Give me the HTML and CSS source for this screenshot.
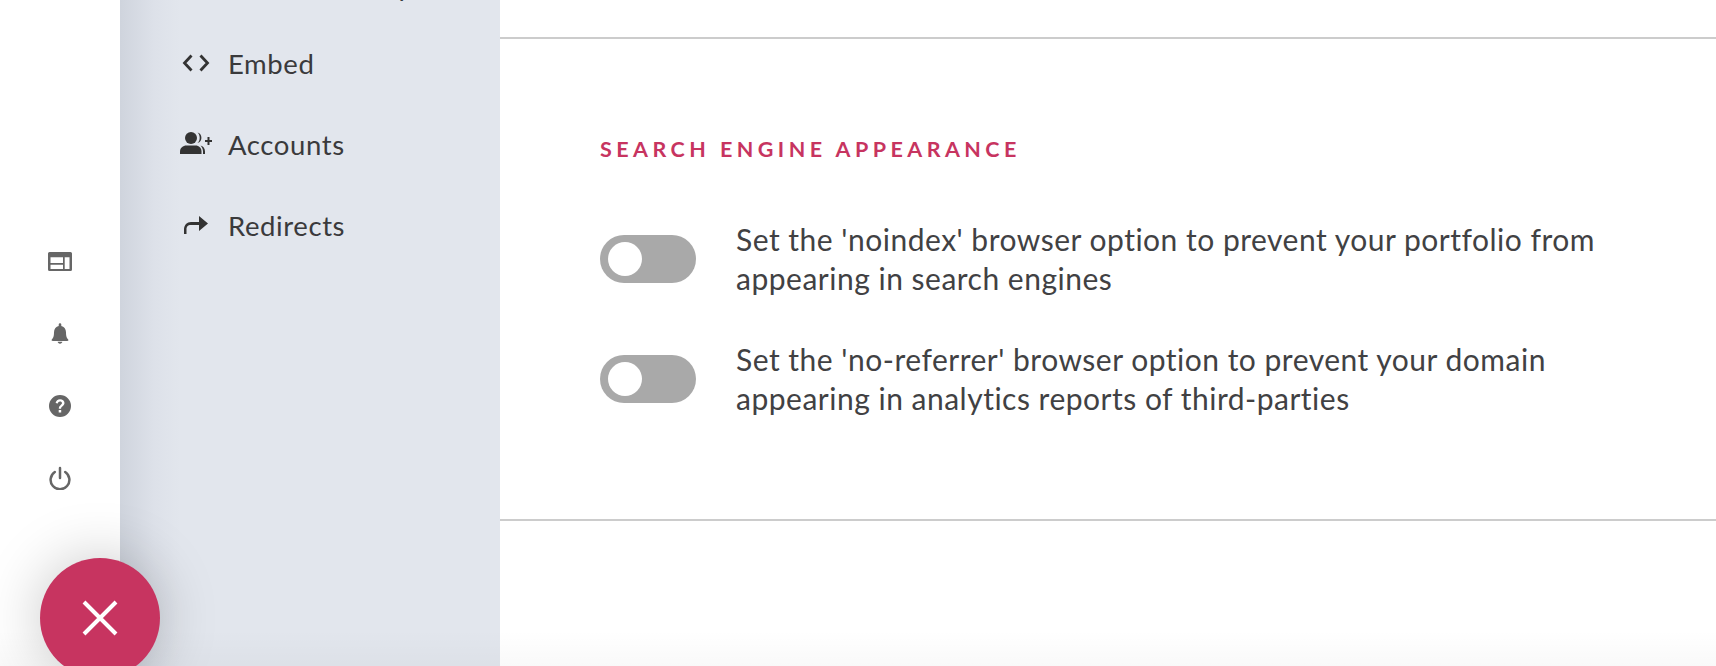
FILE: index.html
```html
<!DOCTYPE html>
<html lang="en">
<head>
    <meta charset="UTF-8">
    <meta name="viewport" content="width=device-width, initial-scale=1.0">
    <title>Portfolio settings</title>
    <link rel="stylesheet" href="styles.css">
</head>
<body>
<div class="rail">
    <svg class="rail-icon" viewBox="0 0 24 24"><path fill-rule="evenodd" d="M1.500 3h21A1.500 1.500 0 0 1 24 4.500v16a1.500 1.500 0 0 1-1.500 1.500h-21A1.500 1.500 0 0 1 0 20.500v-16A1.500 1.500 0 0 1 1.500 3zM2.500 8.300v5.700h12.500V8.300zM2.500 15.700v4.300h12.500v-4.300zM16.700 8.300v11.700H21.500V8.300z"/></svg>
    <svg class="rail-icon" viewBox="0 0 24 24"><path d="M12 22.700c1.300 0 2.300-.9 2.300-1.900H9.700c0 1 1 1.900 2.300 1.900zM20 18.200c-.9-1-2-2.200-2-7 0-3.100-2.100-5.500-4.700-6.100V3.500a1.300 1.300 0 0 0-2.600 0v1.600C8.100 5.700 6 8.100 6 11.200c0 4.800-1.100 6-2 7-.3.300-.4.600-.4.800 0 .6.500.9 1 .9h14.800c.5 0 1-.3 1-.9 0-.2-.1-.5-.4-.8z"/></svg>
    <svg class="rail-icon" viewBox="0 0 24 24"><path fill-rule="evenodd" d="M12 1a11 11 0 1 0 0 22 11 11 0 0 0 0-22zM13.200 18.500h-2.500V16h2.500zM15.800 11c-.6.800-1.300 1.200-1.800 1.700-.7.600-.9 1-.9 2.100h-2.300c0-1.900.6-2.700 1.500-3.400.7-.6 1.700-1.100 1.700-2.300 0-.9-.8-1.600-2-1.600s-2 .8-2.200 1.900L7.600 9c.4-2.300 2.200-3.700 4.400-3.700 2.500 0 4.500 1.500 4.500 3.800 0 .7-.3 1.400-.7 1.900z"/></svg>
    <svg class="rail-icon" viewBox="0 0 24 24"><path class="rail-stroke" d="M12 2v10M6.800 6a9.400 9.400 0 1 0 10.400 0"/></svg>
</div>

<nav class="subnav">
    <a class="subnav-item subnav-item-clipped">
        <span class="subnav-icon"></span>
        <span>Cookies Policy</span>
    </a>
    <a class="subnav-item">
        <svg class="subnav-icon" viewBox="0 0 32 32"><path class="nav-stroke" d="M11.500 8.500 4.500 16l7 7.500M20.500 8.500l7 7.500-7 7.500"/></svg>
        <span>Embed</span>
    </a>
    <a class="subnav-item">
        <svg class="subnav-icon" viewBox="0 0 32 32"><circle cx="11" cy="10" r="6"/><path d="M0 26v-2.500C0 20 3 17.500 6.500 17.500h9c3.500 0 6 2.500 6 6V26z"/><path d="M17.500 4.500c2.800.6 3.900 3 3.900 5.300s-1.100 4.600-3.900 5.300c1.500-1.300 2.200-3.200 2.200-5.300s-.7-4-2.200-5.300zM20.500 17.500c2.700.5 4.500 2.800 4.500 6V26h-2v-2.500c0-2.500-1-4.400-2.500-6z"/><path d="M27.500 9h2v3H32v2h-2.500v3h-2v-3H25v-2h2.500z"/></svg>
        <span>Accounts</span>
    </a>
    <a class="subnav-item">
        <svg class="subnav-icon" viewBox="0 0 32 32"><path d="M19 7l9 7.500-9 7.500v-6h-8c-3.500 0-4.500 2-4.500 4.500V25H4v-4.500C4 16 7 13 11 13h8z"/></svg>
        <span>Redirects</span>
    </a>
</nav>

<main class="content">
    <section class="panel">
        <h2 class="panel-title">Search engine appearance</h2>
        <div class="option">
            <span class="toggle"><span class="knob"></span></span>
            <p>Set the 'noindex' browser option to prevent your portfolio from appearing in search engines</p>
        </div>
        <div class="option">
            <span class="toggle"><span class="knob"></span></span>
            <p>Set the 'no-referrer' browser option to prevent your domain appearing in analytics reports of third-parties</p>
        </div>
    </section>
</main>

<div class="bottom-fade"></div>

<button class="fab">
    <svg viewBox="0 0 36 36"><path d="M2 2l32 32M34 2 2 34"/></svg>
</button>
</body>
</html>
```

FILE: styles.css
```css
html, body {
    height: 100%;
}
body {
    font-family: Lato, "Open Sans", sans-serif;
    background-color: #fff;
    color: #414143;
    margin: 0;
    display: flex;
    overflow: hidden;
}
.rail {
    width: 120px;
    flex-shrink: 0;
    display: flex;
    flex-direction: column;
    align-items: center;
    gap: 48.3px;
    padding-top: 249px;
    box-sizing: border-box;
}
.rail-icon {
    width: 24px;
    height: 24px;
    fill: #666;
}
.rail-stroke {
    fill: none;
    stroke: #666;
    stroke-width: 2.500;
    stroke-linecap: round;
}
.subnav {
    width: 380px;
    flex-shrink: 0;
    background: linear-gradient(90deg, #cfd4dd, #dde1e9 34px, #e2e6ed 60px);
    display: flex;
    flex-direction: column;
    gap: 41px;
    margin-top: -35px;
    padding: 0 0 0 60px;
    box-sizing: border-box;
}
.subnav-item {
    display: flex;
    align-items: center;
    gap: 16px;
    height: 40px;
    font-size: 27.5px;
    letter-spacing: 0.6px;
    color: #3a3a3c;
}
.subnav-item-clipped {
    margin-bottom: -3px;
}
.subnav-icon {
    width: 32px;
    height: 32px;
    fill: #333;
    flex-shrink: 0;
}
.nav-stroke {
    fill: none;
    stroke: #333;
    stroke-width: 2.800;
}
.content {
    flex: 1;
    padding-top: 37px;
}
.panel {
    border-top: 2px solid #ccc;
    border-bottom: 2px solid #ccc;
    padding: 100px 100px 0;
    height: 484px;
    box-sizing: border-box;
}
.panel-title {
    margin: 0 0 61px;
    color: #c73460;
    font-size: 21.5px;
    font-weight: 700;
    line-height: 20px;
    letter-spacing: 4.460px;
    text-transform: uppercase;
}
.option {
    display: flex;
    align-items: center;
    gap: 40px;
    margin-bottom: 42px;
}
.option p {
    margin: 0;
    font-size: 30px;
    line-height: 39px;
    letter-spacing: 0.5px;
    width: 880px;
}
.toggle {
    width: 96px;
    height: 48px;
    flex-shrink: 0;
    border-radius: 24px;
    background-color: #a9a9a9;
    display: flex;
    align-items: center;
    padding-left: 8px;
    box-sizing: border-box;
}
.knob {
    width: 34px;
    height: 34px;
    border-radius: 50%;
    background-color: #fff;
}
.bottom-fade {
    position: absolute;
    left: 0;
    right: 0;
    bottom: 0;
    height: 36px;
    background: linear-gradient(rgba(0, 0, 0, 0), rgba(0, 0, 0, 0.025));
}
.fab {
    position: absolute;
    left: 40px;
    top: 558px;
    width: 120px;
    height: 120px;
    border: none;
    border-radius: 50%;
    background-color: #c73460;
    box-shadow: 0 0 60px rgba(0, 0, 0, 0.22);
    display: flex;
    align-items: center;
    justify-content: center;
    padding: 0;
}
.fab svg {
    width: 36px;
    height: 36px;
    fill: none;
    stroke: #fff;
    stroke-width: 4;
}
```
